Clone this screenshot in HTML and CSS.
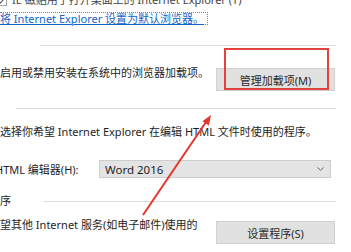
FILE: index.html
```html
<!DOCTYPE html>
<html lang="zh-CN">
<head>
<meta charset="utf-8">
<title>Internet 选项 - 程序</title>
<link rel="stylesheet" href="styles.css">
</head>
<body>
<div class="page">
  <div class="check-row">
    <span class="checkbox">
      <svg width="9" height="9" viewBox="0 0 9 9"><path d="M1.2 4.6 L3.5 7 L7.8 1.6" fill="none" stroke="#555" stroke-width="1.1"/></svg>
    </span>
    <span class="muted">IE 磁贴用于打开桌面上的 Internet Explorer (T)</span>
  </div>

  <div class="link-row"><a class="link" href="#">将 Internet Explorer 设置为默认浏览器。</a></div>

  <div class="group-head g1"><span class="rule"></span></div>
  <div class="split first">
    <p class="desc">启用或禁用安装在系统中的浏览器加载项。</p>
    <button class="btn">管理加载项(M)</button>
  </div>

  <div class="group-head g2"><span class="rule"></span></div>
  <p class="desc html-desc">选择你希望 Internet Explorer 在编辑 HTML 文件时使用的程序。</p>
  <div class="field">
    <span class="field-label">HTML 编辑器(H):</span>
    <div class="combo">
      <span>Word 2016</span>
      <svg class="chev" width="7" height="4" viewBox="0 0 7 4"><path d="M0.5 0.5 L3.5 3.3 L6.5 0.5" fill="none" stroke="#666" stroke-width="1"/></svg>
    </div>
  </div>

  <div class="group-head g3"><span class="gtitle">程序</span><span class="rule"></span></div>
  <div class="split second">
    <p class="desc">望其他 Internet 服务(如电子邮件)使用的</p>
    <button class="btn">设置程序(S)</button>
  </div>

  <div class="mark-box"></div>
  <svg class="arrow" width="351" height="252" viewBox="0 0 351 252">
    <line x1="143" y1="222" x2="206" y2="129" stroke="#e3362c" stroke-width="2"/>
    <polygon points="211,122 202.4,128.3 208.9,132.6" fill="#e3362c"/>
  </svg>
</div>
</body>
</html>
```

FILE: styles.css
```css
html, body {
  margin: 0;
  padding: 0;
  background: #ffffff;
}

body {
  width: 351px;
  height: 252px;
  overflow: hidden;
  font-family: "Noto Sans", "Noto Sans CJK SC", sans-serif;
  font-size: 11px;
  color: #1e1e1e;
}

.page {
  position: relative;
  width: 351px;
  height: 252px;
  box-sizing: border-box;
  padding-right: 15px;
}

.check-row {
  display: flex;
  align-items: center;
  height: 14px;
  line-height: 14px;
  margin-top: -7px;
  white-space: nowrap;
}

.checkbox {
  display: flex;
  align-items: center;
  justify-content: center;
  width: 11px;
  height: 11px;
  margin-left: -4px;
  margin-right: 5px;
  border: 1px solid #a8a8a8;
  background: #fff;
  box-sizing: border-box;
}

.muted {
  color: #444;
}

.link-row {
  margin-top: 5px;
  height: 13px;
  display: flex;
}

.link {
  display: inline-block;
  height: 13px;
  line-height: 11px;
  box-sizing: border-box;
  padding: 0 3px 0 0;
  border: 1px dotted #5b86c9;
  border-left: none;
  color: #1463c6;
  text-decoration: underline;
  white-space: nowrap;
}

.group-head {
  display: flex;
  align-items: center;
}

.rule {
  flex: 1;
  height: 1px;
  background: #dadada;
}

.g1 {
  margin-top: 20px;
  height: 1px;
}
.g1 .rule { margin-left: 40px; }

.g2 {
  margin-top: 17px;
  height: 1px;
}
.g2 .rule { margin-left: 16px; }

.g3 {
  margin-top: 16px;
  height: 14px;
  line-height: 14px;
}
.g3 .gtitle {
  margin-left: -11px;
  white-space: nowrap;
}
.g3 .rule {
  margin-left: 33px;
  margin-top: 1px;
}

.desc {
  margin: 0;
  line-height: 14px;
  white-space: nowrap;
}

.split {
  display: flex;
  align-items: flex-start;
  justify-content: space-between;
}

.split.first {
  margin-top: 20px;
}
.split.first .btn {
  margin-top: 2px;
}

.split.second {
  margin-top: 10px;
}
.split.second .btn {
  margin-top: 3px;
}

.btn {
  width: 119px;
  height: 23px;
  margin-right: 1px;
  padding: 0;
  font-family: inherit;
  font-size: 11px;
  color: #2a2a2a;
  background: #e1e1e1;
  border: 1px solid #d0d0d0;
  border-radius: 0;
}

.html-desc {
  margin-top: 16px;
}

.field {
  display: flex;
  align-items: center;
  margin-top: 21px;
  height: 18px;
}

.field-label {
  margin-left: -5px;
  width: 104px;
  white-space: nowrap;
}

.combo {
  display: flex;
  align-items: center;
  justify-content: space-between;
  width: 232px;
  height: 18px;
  box-sizing: border-box;
  padding: 0 6px 0 5px;
  background: #e4e4e4;
  border: 1px solid #cdcdcd;
  font-size: 11.5px;
  color: #1e1e1e;
}

.mark-box {
  position: absolute;
  left: 224px;
  top: 55px;
  width: 105px;
  height: 42px;
  box-sizing: border-box;
  border: 2px solid #e4433d;
}

.arrow {
  position: absolute;
  left: 0;
  top: 0;
}
```
